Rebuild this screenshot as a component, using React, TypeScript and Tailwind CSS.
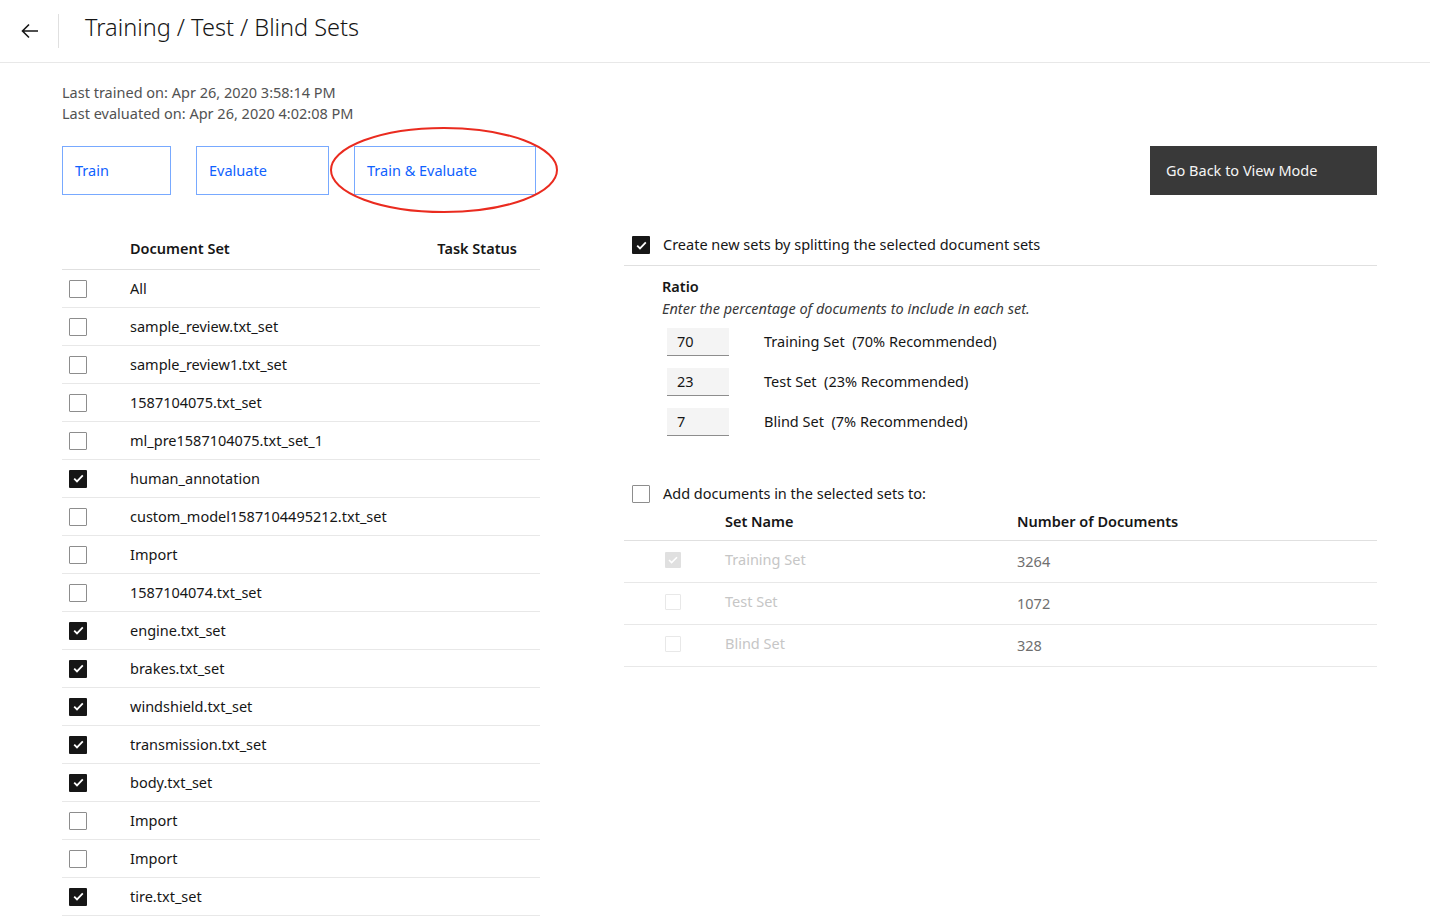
import React from "react";

const FONT = { fontFamily: '"Noto Sans", "Open Sans", sans-serif' };

function Check({ checked, disabled }: { checked?: boolean; disabled?: boolean }) {
  if (disabled) {
    return checked ? (
      <span className="flex h-[16px] w-[16px] items-center justify-center rounded-[1px] bg-[#e0e0e0]">
        <svg width="10" height="8" viewBox="0 0 10 8"><path d="M1 4l2.6 2.6L9 1.2" fill="none" stroke="#fff" strokeWidth="1.6" /></svg>
      </span>
    ) : (
      <span className="block h-[16px] w-[16px] rounded-[1px] border border-[#e8e8e8] bg-white" />
    );
  }
  return checked ? (
    <span className="flex h-[18px] w-[18px] items-center justify-center rounded-[1px] bg-[#161616]">
      <svg width="11" height="9" viewBox="0 0 11 9"><path d="M1.2 4.6l2.8 2.8L9.8 1.4" fill="none" stroke="#fff" strokeWidth="1.8" /></svg>
    </span>
  ) : (
    <span className="block h-[18px] w-[18px] rounded-[1px] border border-[#8d8d8d] bg-white" />
  );
}

const docs: [string, boolean][] = [
  ["All", false],
  ["sample_review.txt_set", false],
  ["sample_review1.txt_set", false],
  ["1587104075.txt_set", false],
  ["ml_pre1587104075.txt_set_1", false],
  ["human_annotation", true],
  ["custom_model1587104495212.txt_set", false],
  ["Import", false],
  ["1587104074.txt_set", false],
  ["engine.txt_set", true],
  ["brakes.txt_set", true],
  ["windshield.txt_set", true],
  ["transmission.txt_set", true],
  ["body.txt_set", true],
  ["Import", false],
  ["Import", false],
  ["tire.txt_set", true],
];

export default function App() {
  return (
    <div className="min-h-[917px] w-[1430px] overflow-hidden bg-white text-[#161616]" style={FONT}>
      {/* header */}
      <div className="flex h-[63px] items-center border-b border-[#e8e8e8]">
        <div className="flex w-[58px] justify-center pl-[2px]">
          <svg width="20" height="20" viewBox="0 0 20 20">
            <path d="M18 10H3M9 3.5L2.5 10 9 16.5" fill="none" stroke="#161616" strokeWidth="1.6" />
          </svg>
        </div>
        <div className="h-[34px] w-px bg-[#e0e0e0]" />
        <div className="ml-[26px] -mt-[6px] text-[23.5px] font-light text-[#161616]">Training / Test / Blind Sets</div>
      </div>

      <div className="pl-[62px] pr-[53px] pt-[19px]">
        <div className="text-[14.5px] leading-[21px] text-[#525252]">
          <div>Last trained on: Apr 26, 2020 3:58:14 PM</div>
          <div>Last evaluated on: Apr 26, 2020 4:02:08 PM</div>
        </div>

        <div className="mt-[22px] flex items-center justify-between">
          <div className="flex gap-[25px]">
            <button className="h-[49px] w-[109px] border border-[#78a9ff] pl-[12px] text-left text-[14.5px] text-[#0f62fe]">Train</button>
            <button className="h-[49px] w-[133px] border border-[#78a9ff] pl-[12px] text-left text-[14.5px] text-[#0f62fe]">Evaluate</button>
            <div className="relative">
              <button className="h-[49px] w-[182px] border border-[#78a9ff] pl-[12px] text-left text-[14.5px] text-[#0f62fe]">Train &amp; Evaluate</button>
              <svg className="pointer-events-none absolute left-[-26px] top-[-20px]" width="232" height="90" viewBox="0 0 232 90">
                <ellipse cx="116" cy="44" rx="113" ry="42" fill="none" stroke="#ea2b1f" strokeWidth="2" />
              </svg>
            </div>
          </div>
          <button className="h-[49px] w-[227px] bg-[#393939] pl-[16px] text-left text-[14.5px] text-[#f4f4f4]">Go Back to View Mode</button>
        </div>

        <div className="mt-[35px] flex">
          {/* left table */}
          <div className="w-[478px]">
            <div className="flex h-[40px] items-center border-b border-[#e0e0e0] pb-[2px] text-[14.5px] font-semibold">
              <div className="ml-[68px] flex-1">Document Set</div>
              <div className="mr-[23px]">Task Status</div>
            </div>
            {docs.map(([name, checked], i) => (
              <div key={i} className="flex h-[38px] items-center border-b border-[#e8e8e8]">
                <div className="ml-[7px] w-[61px]">
                  <Check checked={checked} />
                </div>
                <div className="text-[14.5px] text-[#161616]">{name}</div>
              </div>
            ))}
          </div>

          {/* right panel */}
          <div className="ml-[84px] flex-1">
            <div className="-mt-[3px] flex h-[39px] items-center border-b border-[#e0e0e0] pb-[2px]">
              <div className="ml-[8px] w-[31px]">
                <Check checked />
              </div>
              <div className="text-[14.5px]">Create new sets by splitting the selected document sets</div>
            </div>
            <div className="ml-[38px] mt-[9px]">
              <div className="text-[14.5px] font-semibold leading-[22px]">Ratio</div>
              <div className="text-[14.5px] italic leading-[22px] text-[#393939]">Enter the percentage of documents to include in each set.</div>
              <div className="ml-[5px] mt-[9px] flex flex-col gap-[12px]">
                {[
                  ["70", "Training Set  (70% Recommended)"],
                  ["23", "Test Set  (23% Recommended)"],
                  ["7", "Blind Set  (7% Recommended)"],
                ].map(([v, l]) => (
                  <div key={v} className="flex items-center">
                    <div className="flex h-[28px] w-[62px] items-center border-b border-[#8d8d8d] bg-[#f4f4f4] pl-[10px] text-[14.5px]">{v}</div>
                    <div className="ml-[35px] whitespace-pre text-[14.5px]">{l}</div>
                  </div>
                ))}
              </div>
            </div>

            <div className="mt-[46px] flex h-[24px] items-center">
              <div className="ml-[8px] w-[31px]">
                <Check />
              </div>
              <div className="text-[14.5px]">Add documents in the selected sets to:</div>
            </div>
            <div className="flex h-[35px] items-center border-b border-[#e0e0e0] pb-[3px] text-[14.5px] font-semibold">
              <div className="ml-[101px] w-[292px]">Set Name</div>
              <div>Number of Documents</div>
            </div>
            {[
              ["Training Set", "3264", true],
              ["Test Set", "1072", false],
              ["Blind Set", "328", false],
            ].map(([n, c, ch]) => (
              <div key={n as string} className="flex h-[42px] items-center border-b border-[#e8e8e8]">
                <div className="ml-[41px] w-[60px] -mt-[3px]">
                  <Check disabled checked={ch as boolean} />
                </div>
                <div className="-mt-[3px] w-[292px] text-[14.5px] text-[#c6c6c6]">{n}</div>
                <div className="text-[14.5px] text-[#6f6f6f]">{c}</div>
              </div>
            ))}
          </div>
        </div>
      </div>
    </div>
  );
}
